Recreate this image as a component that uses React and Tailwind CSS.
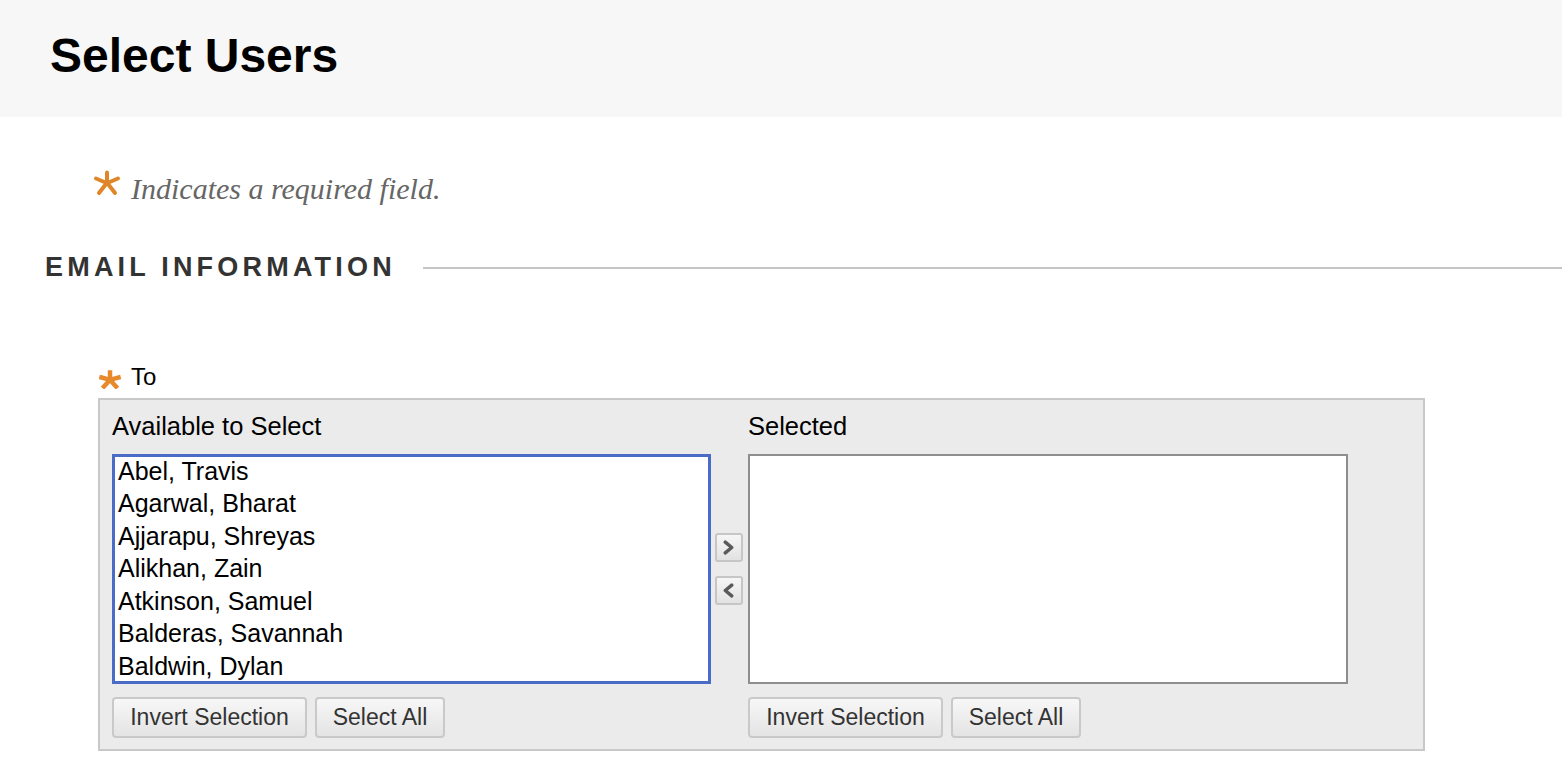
import React from 'react';

const names = [
  'Abel, Travis',
  'Agarwal, Bharat',
  'Ajjarapu, Shreyas',
  'Alikhan, Zain',
  'Atkinson, Samuel',
  'Balderas, Savannah',
  'Baldwin, Dylan',
];

const sans = { fontFamily: '"Liberation Sans", Arial, Helvetica, sans-serif' };

const Asterisk = ({ className = '' }) => (
  <svg className={className} viewBox="0 0 28 26" fill="none">
    <g stroke="#e0862a" strokeWidth="4" strokeLinecap="round">
      <line x1="14" y1="2.5" x2="14" y2="12" />
      <line x1="3" y1="8.5" x2="12.5" y2="12.5" />
      <line x1="25" y1="8.5" x2="15.5" y2="12.5" />
      <line x1="6" y1="23" x2="13" y2="14" />
      <line x1="22" y1="23" x2="15" y2="14" />
    </g>
  </svg>
);

const SmallStar = ({ className = '' }) => (
  <svg className={className} viewBox="0 0 22 19" fill="none">
    <g stroke="#e8892c" strokeWidth="4.5" strokeLinecap="square">
      <line x1="11" y1="2.5" x2="11" y2="9" />
      <line x1="2.5" y1="7.5" x2="10" y2="9.5" />
      <line x1="19.5" y1="7.5" x2="12" y2="9.5" />
      <line x1="5" y1="16.5" x2="10" y2="11" />
      <line x1="17" y1="16.5" x2="12" y2="11" />
    </g>
  </svg>
);

const Btn = ({ children, className = '' }) => (
  <button
    className={`h-[41px] rounded-[4px] border-2 border-[#c9c9c9] bg-gradient-to-b from-[#f7f7f7] to-[#e4e4e4] text-[23px] text-[#333] leading-none ${className}`}
    style={sans}
  >
    {children}
  </button>
);

const ArrowBtn = ({ dir }) => (
  <div className="flex h-[29px] w-[28px] items-center justify-center rounded-[3px] border-2 border-[#c6c6c6] bg-gradient-to-b from-[#f6f6f6] to-[#e2e2e2]">
    <svg width="13" height="15" viewBox="0 0 12 14" fill="none">
      <polyline
        points={dir === 'right' ? '3,2 9,7 3,12' : '9,2 3,7 9,12'}
        stroke="#5a5a5a"
        strokeWidth="3.2"
        strokeLinejoin="round"
        strokeLinecap="round"
      />
    </svg>
  </div>
);

export default function App() {
  return (
    <div className="min-h-screen w-full bg-white" style={sans}>
      {/* Page title */}
      <div className="h-[117px] bg-[#f7f7f7] pl-[50px] pt-[32px]">
        <h1 className="text-[48px] font-bold leading-none text-black" style={sans}>
          Select Users
        </h1>
      </div>

      {/* Required note */}
      <div className="mt-[53px] flex items-start pl-[93px]">
        <Asterisk className="h-[26px] w-[28px]" />
        <span
          className="ml-[10px] mt-[4px] text-[30px] italic leading-none text-[#666]"
          style={{ fontFamily: '"Liberation Serif", Georgia, serif' }}
        >
          Indicates a required field.
        </span>
      </div>

      {/* Section heading */}
      <div className="mt-[50px] flex items-center pl-[45px]">
        <h2 className="text-[27px] font-bold uppercase leading-none tracking-[4.2px] text-[#333]">
          Email Information
        </h2>
        <div className="ml-[27px] h-[2px] flex-1 bg-[#c6c6c6]" />
      </div>

      {/* To field */}
      <div className="mt-[84px] flex items-end pl-[99px]">
        <SmallStar className="h-[19px] w-[22px]" />
        <span className="ml-[10px] text-[24px] leading-none text-black">To</span>
      </div>

      <div className="ml-[98px] mt-[9px] w-[1327px] border-2 border-[#c8c8c8] bg-[#ebebeb] pb-[11px] pl-[12px] pt-[14px]">
        <div className="grid grid-cols-[599px_37px_600px]">
          <div className="text-[25.5px] leading-none text-black">Available to Select</div>
          <div />
          <div className="text-[25.5px] leading-none text-black">Selected</div>

          <div className="mt-[14px] h-[230px] overflow-hidden border-[3px] border-[#4a6bc6] bg-white pl-[3px]">
            <div className="-mt-[2px]">
              {names.map((n) => (
                <div key={n} className="whitespace-nowrap text-[25px] leading-[32.6px] text-black">
                  {n}
                </div>
              ))}
            </div>
          </div>
          <div className="mt-[14px] flex flex-col items-center justify-center gap-[14px] pr-[2px]">
            <ArrowBtn dir="right" />
            <ArrowBtn dir="left" />
          </div>
          <div className="mt-[14px] h-[230px] border-2 border-[#8e8e8e] bg-white" />

          <div className="mt-[13px] flex gap-[8px]">
            <Btn className="w-[195px]">Invert Selection</Btn>
            <Btn className="w-[130px]">Select All</Btn>
          </div>
          <div />
          <div className="mt-[13px] flex gap-[8px]">
            <Btn className="w-[195px]">Invert Selection</Btn>
            <Btn className="w-[130px]">Select All</Btn>
          </div>
        </div>
      </div>
    </div>
  );
}
